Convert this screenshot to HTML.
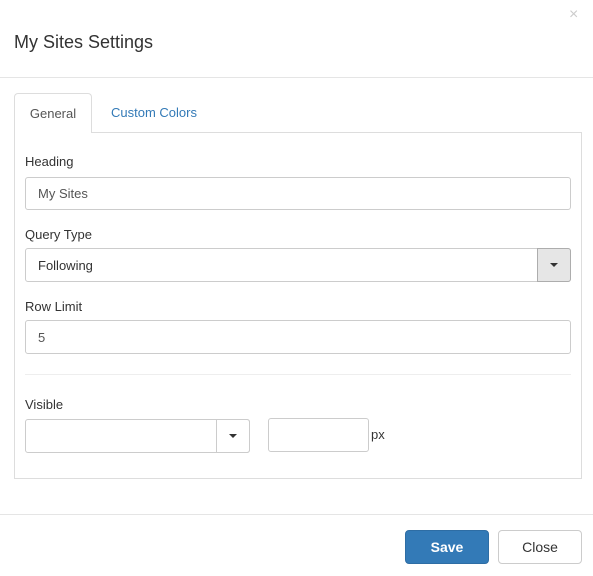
<!DOCTYPE html><html><head><style>
body{margin:0;width:593px;height:576px;background:#fff;font-family:"Liberation Sans",sans-serif;color:#333;position:relative;overflow:hidden}
.a{position:absolute}
.lbl{font-size:13px;color:#333}
.inp{border:1px solid #ccc;border-radius:3px;box-sizing:border-box;font-size:13px;color:#555;padding-left:12px;display:flex;align-items:center;background:#fff}
.caret{width:0;height:0;border-left:4px solid transparent;border-right:4px solid transparent;border-top:4px solid #333}
</style></head><body>
<div class="a" style="left:569px;top:6px;font-size:16px;color:#ccc">×</div>
<div class="a" style="left:14px;top:32px;font-size:18px;color:#333">My Sites Settings</div>
<div class="a" style="left:0;top:77px;width:593px;height:1px;background:#e5e5e5"></div>
<div class="a" style="left:14px;top:132px;width:566px;height:345px;border:1px solid #ddd"></div>
<div class="a" style="left:14px;top:93px;width:78px;height:40px;border:1px solid #ddd;border-bottom:none;border-radius:4px 4px 0 0;background:#fff;box-sizing:border-box;font-size:13px;color:#555;text-align:center;line-height:40px;height:40px">General</div>
<div class="a" style="left:111px;top:105px;font-size:13px;color:#337ab7">Custom Colors</div>
<div class="a lbl" style="left:25px;top:154px">Heading</div>
<div class="a inp" style="left:25px;top:177px;width:546px;height:33px">My Sites</div>
<div class="a lbl" style="left:25px;top:227px">Query Type</div>
<div class="a inp" style="left:25px;top:248px;width:546px;height:34px;color:#333">Following</div>
<div class="a" style="left:537px;top:248px;width:34px;height:34px;box-sizing:border-box;border:1px solid #adadad;border-radius:0 3px 3px 0;background:#e6e6e6;display:flex;align-items:center;justify-content:center"><div class="caret"></div></div>
<div class="a lbl" style="left:25px;top:299px">Row Limit</div>
<div class="a inp" style="left:25px;top:320px;width:546px;height:34px">5</div>
<div class="a" style="left:25px;top:374px;width:546px;height:1px;background:#eee"></div>
<div class="a lbl" style="left:25px;top:397px">Visible</div>
<div class="a inp" style="left:25px;top:419px;width:225px;height:34px"></div>
<div class="a" style="left:216px;top:419px;width:34px;height:34px;box-sizing:border-box;border:1px solid #ccc;border-radius:0 3px 3px 0;display:flex;align-items:center;justify-content:center"><div class="caret"></div></div>
<div class="a inp" style="left:268px;top:418px;width:101px;height:34px"></div>
<div class="a lbl" style="left:371px;top:427px">px</div>
<div class="a" style="left:0;top:514px;width:593px;height:1px;background:#e5e5e5"></div>
<div class="a" style="left:405px;top:530px;width:84px;height:34px;background:#337ab7;border:1px solid #2e6da4;border-radius:4px;box-sizing:border-box;color:#fff;font-weight:bold;font-size:14px;text-align:center;line-height:32px">Save</div>
<div class="a" style="left:498px;top:530px;width:84px;height:34px;background:#fff;border:1px solid #ccc;border-radius:4px;box-sizing:border-box;color:#333;font-size:14px;text-align:center;line-height:32px">Close</div>
</body></html>
